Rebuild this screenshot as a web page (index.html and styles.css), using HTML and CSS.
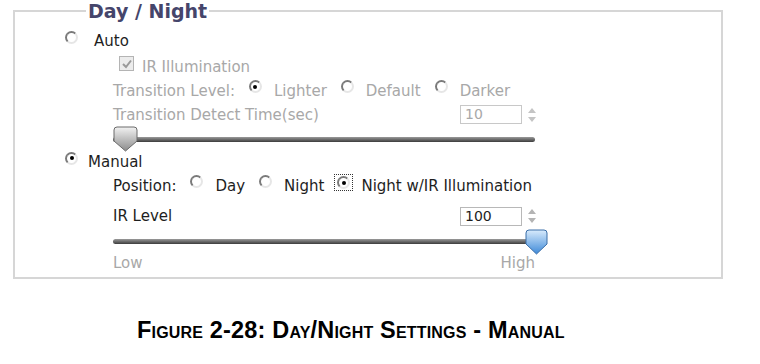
FILE: index.html
```html
<!DOCTYPE html>
<html lang="en">
<head>
  <meta charset="UTF-8">
  <title>Day / Night</title>
  <link rel="stylesheet" href="styles.css">
</head>
<body>
  <div class="page">
    <fieldset class="panel">
      <legend>Day / Night</legend>

      <div class="row row-auto">
        <span class="radio"></span>
        <span class="label auto-label">Auto</span>
      </div>

      <div class="row row-ir sub disabled">
        <span class="check">
          <svg width="12" height="12" viewBox="0 0 12 12"><path d="M2 6 L5 9 L10 2.5" fill="none" stroke="#9a9a9a" stroke-width="2"/></svg>
        </span>
        <span class="label">IR Illumination</span>
      </div>

      <div class="row row-tl sub disabled">
        <span class="label">Transition Level:</span>
        <span class="radio on opt-first"></span><span class="label">Lighter</span>
        <span class="radio"></span><span class="label">Default</span>
        <span class="radio"></span><span class="label">Darker</span>
      </div>

      <div class="row row-tdt sub disabled">
        <span class="label grow">Transition Detect Time(sec)</span>
        <span class="num">10</span>
        <span class="spin">
          <svg width="10" height="18" viewBox="0 0 10 18"><path d="M5 2 L9 7 H1 Z M5 16 L9 11 H1 Z" fill="#c4c4c4"/></svg>
        </span>
      </div>

      <div class="row row-s1 sub">
        <div class="slider">
          <div class="track"></div>
          <svg class="thumb thumb-low" width="25" height="26" viewBox="0 0 25 26">
            <defs>
              <linearGradient id="g1" x1="0" y1="0" x2="0" y2="1">
                <stop offset="0" stop-color="#f2f2f2"/>
                <stop offset="1" stop-color="#8c8c8c"/>
              </linearGradient>
            </defs>
            <path d="M4 1 H21 Q24 1 24 4 V15 L12.5 25 L1 15 V4 Q1 1 4 1 Z" fill="url(#g1)" stroke="#6a6a6a"/>
          </svg>
        </div>
      </div>

      <div class="row row-manual">
        <span class="radio on"></span>
        <span class="label">Manual</span>
      </div>

      <div class="row row-pos sub">
        <span class="label">Position:</span>
        <span class="radio opt-first"></span><span class="label">Day</span>
        <span class="radio"></span><span class="label">Night</span>
        <span class="focus"><span class="radio on"></span></span><span class="label">Night w/IR Illumination</span>
      </div>

      <div class="row row-irl sub">
        <span class="label grow">IR Level</span>
        <span class="num">100</span>
        <span class="spin">
          <svg width="10" height="18" viewBox="0 0 10 18"><path d="M5 2 L9 7 H1 Z M5 16 L9 11 H1 Z" fill="#b4b4b4"/></svg>
        </span>
      </div>

      <div class="row row-s2 sub">
        <div class="slider">
          <div class="track"></div>
          <svg class="thumb thumb-high" width="23" height="26" viewBox="0 0 23 26">
            <defs>
              <linearGradient id="g2" x1="0" y1="0" x2="0" y2="1">
                <stop offset="0" stop-color="#d8ebfc"/>
                <stop offset="1" stop-color="#3f8ad8"/>
              </linearGradient>
            </defs>
            <path d="M4 1 H19 Q22 1 22 4 V15 L11.5 25 L1 15 V4 Q1 1 4 1 Z" fill="url(#g2)" stroke="#3a6ea8"/>
          </svg>
        </div>
      </div>

      <div class="row row-lh sub disabled">
        <span class="label grow">Low</span>
        <span class="label">High</span>
      </div>
    </fieldset>

    <p class="caption">Figure 2-28: Day/Night Settings - Manual</p>
  </div>
</body>
</html>
```

FILE: styles.css
```css
body {
  margin: 0;
  background-color: #fff;
  font-family: 'DejaVu Sans', Verdana, sans-serif;
  font-size: 15px;
  color: #1e1e1e;
}

.page {
  width: 760px;
  height: 364px;
  padding-left: 13px;
  box-sizing: border-box;
}

.panel {
  width: 710px;
  height: 279px;
  margin: 0;
  padding: 0 0 0 50px;
  box-sizing: border-box;
  border: 2px solid #d6d6d6;
}

.panel legend {
  margin-left: 21px;
  padding: 0 2px;
  font-size: 19px;
  font-weight: bold;
  color: #45456b;
  line-height: 22px;
}

.row {
  display: flex;
  align-items: center;
}

.sub {
  padding-left: 48px;
  width: 424px;
}

.disabled {
  color: #a8a8a8;
}

.row-auto   { height: 28px; margin-top: 5px; }
.row-ir     { height: 23px; }
.row-tl     { height: 25px; }
.row-tdt    { height: 23px; }
.row-s1     { height: 30px; }
.row-manual { height: 12px; }
.row-pos    { height: 35px; }
.row-irl    { height: 26px; }
.row-s2     { height: 22px; }
.row-lh     { height: 23px; width: 422px; }

.auto-label {
  margin-left: 6px;
}

.radio {
  width: 9px;
  height: 9px;
  border-radius: 50%;
  border: 2px solid;
  border-color: #7a7a7a #e6e6e6 #e6e6e6 #7a7a7a;
  background-color: #fff;
  margin: 0 12px 8px 0;
  flex: none;
  display: flex;
  align-items: center;
  justify-content: center;
}

.radio.on::after {
  content: '';
  width: 4px;
  height: 4px;
  border-radius: 50%;
  background-color: #000;
}

.row-manual .radio,
.row-auto .radio {
  margin-right: 10px;
}

.label + .radio {
  margin-left: 14px;
}

.opt-first {
  margin-left: 14px;
}

.focus {
  display: flex;
  border: 1px dotted #333;
  padding: 1px 0 1px 2px;
  margin: 0 8px 6px 10px;
}

.focus .radio {
  margin: 0 2px 0 0;
}

.check {
  width: 13px;
  height: 13px;
  border: 1px solid #b4b4b4;
  background-color: #ececec;
  margin: 0 8px 6px 6px;
  display: flex;
  align-items: center;
  justify-content: center;
}

.grow {
  flex: 1;
}

.num {
  width: 56px;
  height: 17px;
  border: 1px solid #b8b8b8;
  padding-left: 4px;
  font-size: 14px;
  line-height: 17px;
}

.disabled .num {
  border-color: #c8c8c8;
}

.spin {
  width: 10px;
  margin-left: 5px;
  display: flex;
}

.slider {
  position: relative;
  width: 422px;
  height: 23px;
}

.track {
  position: absolute;
  left: 0;
  right: 0;
  top: 10px;
  height: 5px;
  border-radius: 3px;
  background: linear-gradient(#9a9a9a, #3c3c3c);
}

.row-s1 .track {
  top: 7px;
}

.thumb {
  position: absolute;
}

.thumb-low {
  left: 0;
  top: -4px;
}

.thumb-high {
  right: -13px;
  top: 0;
}

.caption {
  margin: 38px 0 0 124px;
  font-family: 'Liberation Sans', Arial, sans-serif;
  font-weight: bold;
  font-variant: small-caps;
  font-size: 23.5px;
  letter-spacing: 0.18px;
  color: #000;
}
```
